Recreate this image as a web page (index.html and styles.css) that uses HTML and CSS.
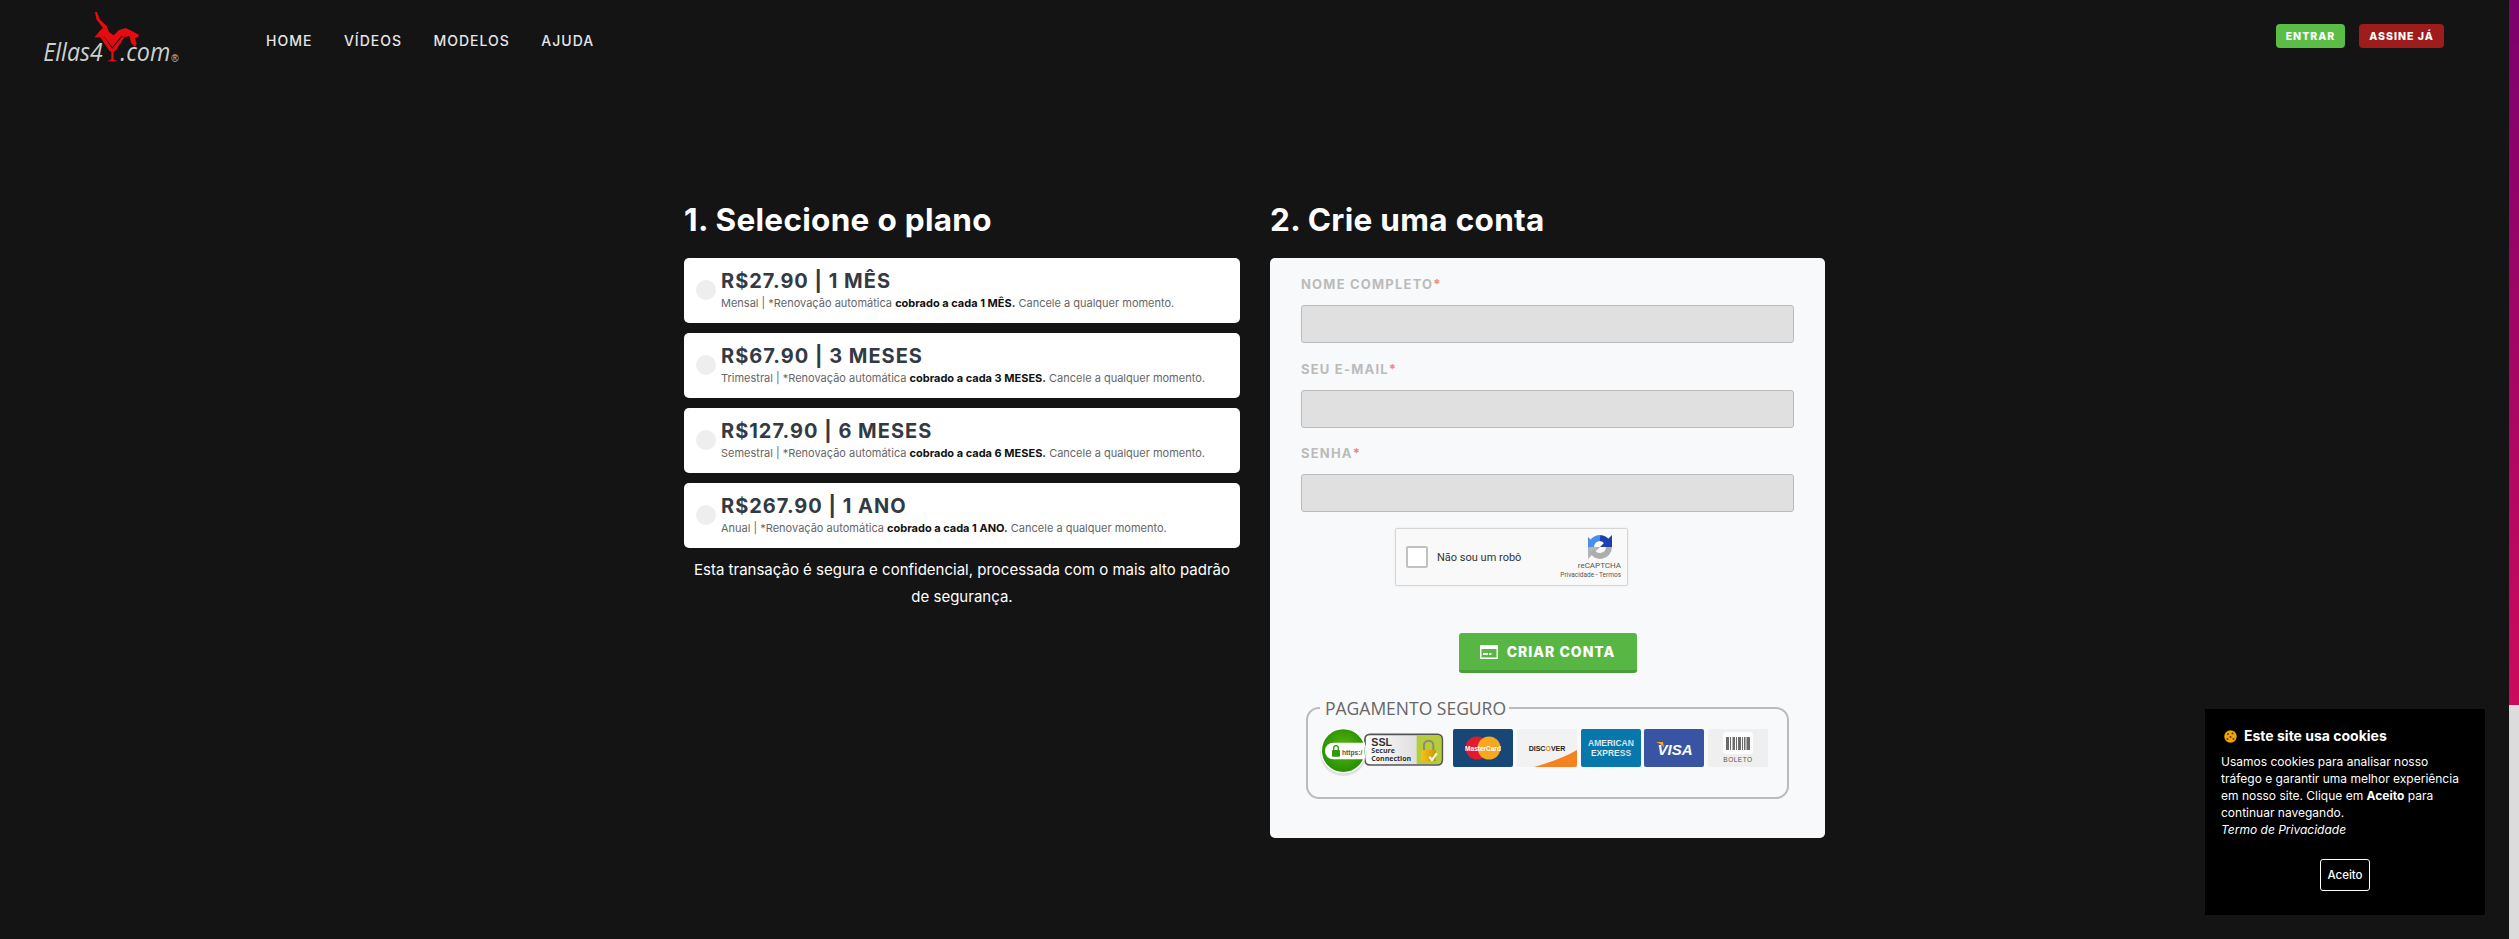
FILE: index.html
```html
<!DOCTYPE html>
<html lang="pt-BR">
<head>
<meta charset="utf-8">
<title>Ellas4Y - Assine</title>
<link rel="stylesheet" href="styles.css">
</head>
<body>
<div class="page">
  <header class="topbar">
    <a class="logo" href="#" aria-label="Ellas4Y.com">
      <svg width="150" height="62" viewBox="0 0 450 186">
        <path class="red" d="M180 12 L186 12 L194 34 L215 54 L222 72 L236 82 L252 66 L272 60 L292 70 L312 80 L309 88 L300 90 L305 108 L299 116 L288 104 L283 84 L268 88 L246 122 L240 130 L232 132 L224 130 L196 88 L178 88 L197 66 L204 60 L184 34 Z"/>
        <path class="dark" d="M199 84 L232 126 L266 84 L259 84 L232 117 L206 84 Z" />
        <path class="red" d="M197 82 L232 130 L270 82 L266 80 L232 122 L203 80 Z"/>
        <path class="red" d="M229 128 H236 V154 L248 160 H216 L229 154 Z"/>
        <text class="logo-text" x="25" y="160" textLength="178" lengthAdjust="spacingAndGlyphs">Ellas4</text>
        <text class="logo-text" x="256" y="160" textLength="150" lengthAdjust="spacingAndGlyphs">.com</text>
        <text class="logo-reg" x="409" y="163">®</text>
      </svg>
    </a>
    <nav class="mainnav">
      <a href="#">HOME</a>
      <a href="#">VÍDEOS</a>
      <a href="#">MODELOS</a>
      <a href="#">AJUDA</a>
    </nav>
    <div class="actions">
      <a class="pill pill-green" href="#">ENTRAR</a>
      <a class="pill pill-red" href="#">ASSINE JÁ</a>
    </div>
  </header>

  <main class="checkout">
    <section class="col">
      <h2>1. Selecione o plano</h2>
      <div class="plans">
        <label class="plan">
          <span class="radio"></span>
          <span class="plan-body">
            <strong class="price">R$27.90 | 1 MÊS</strong>
            <small class="terms">Mensal | *Renovação automática <b>cobrado a cada 1 MÊS.</b> Cancele a qualquer momento.</small>
          </span>
        </label>
        <label class="plan">
          <span class="radio"></span>
          <span class="plan-body">
            <strong class="price">R$67.90 | 3 MESES</strong>
            <small class="terms">Trimestral | *Renovação automática <b>cobrado a cada 3 MESES.</b> Cancele a qualquer momento.</small>
          </span>
        </label>
        <label class="plan">
          <span class="radio"></span>
          <span class="plan-body">
            <strong class="price">R$127.90 | 6 MESES</strong>
            <small class="terms">Semestral | *Renovação automática <b>cobrado a cada 6 MESES.</b> Cancele a qualquer momento.</small>
          </span>
        </label>
        <label class="plan">
          <span class="radio"></span>
          <span class="plan-body">
            <strong class="price">R$267.90 | 1 ANO</strong>
            <small class="terms">Anual | *Renovação automática <b>cobrado a cada 1 ANO.</b> Cancele a qualquer momento.</small>
          </span>
        </label>
      </div>
      <p class="secure-note">Esta transação é segura e confidencial, processada com o mais alto padrão de segurança.</p>
    </section>

    <section class="col">
      <h2>2. Crie uma conta</h2>
      <form class="signup">
        <div class="fields">
          <div class="field">
            <label>NOME COMPLETO<i>*</i></label>
            <div class="input"></div>
          </div>
          <div class="field">
            <label>SEU E-MAIL<i>*</i></label>
            <div class="input"></div>
          </div>
          <div class="field">
            <label>SENHA<i>*</i></label>
            <div class="input"></div>
          </div>
        </div>

        <div class="captcha">
          <span class="captcha-box"></span>
          <span class="captcha-label">Não sou um robô</span>
          <span class="captcha-brand">
            <svg width="26" height="26" viewBox="0 0 26 26">
              <path d="M4 13 A9 9 0 0 1 13 4" fill="none" stroke="#4a8ee8" stroke-width="6"/>
              <path d="M13 4 A9 9 0 0 1 20 8" fill="none" stroke="#1e3fae" stroke-width="6"/>
              <path d="M25 1 V13 H13 Z" fill="#1e3fae"/>
              <path d="M22 13 A9 9 0 0 1 5 17" fill="none" stroke="#adadad" stroke-width="6"/>
              <path d="M1 25 V13 H13 Z" fill="#adadad" opacity=".9"/>
              <path d="M1 3 L7 9 L1 14 Z" fill="#4a8ee8"/>
            </svg>
            <span class="cap-name">reCAPTCHA</span>
            <span class="cap-links">Privacidade - Termos</span>
          </span>
        </div>

        <button class="submit" type="button">
          <svg width="18" height="14" viewBox="0 0 18 14">
            <rect width="18" height="14" rx="1" fill="#fff"/>
            <rect x="1.5" y="4" width="15" height="8.5" fill="#58b744"/>
            <rect x="3" y="8" width="5" height="2" fill="#fff"/>
            <rect x="9" y="8" width="2.500" height="2" fill="#fff"/>
          </svg>
          CRIAR CONTA
        </button>

        <fieldset class="payment">
          <legend>PAGAMENTO SEGURO</legend>
          <div class="badges">
            <svg class="ssl" width="140" height="60" viewBox="0 0 420 180">
              <defs>
                <radialGradient id="gr" cx="50%" cy="45%" r="60%">
                  <stop offset="0" stop-color="#5cb80f"/>
                  <stop offset="1" stop-color="#1f8a02"/>
                </radialGradient>
                <linearGradient id="sl" x1="0" x2="1">
                  <stop offset="0" stop-color="#fff"/>
                  <stop offset="1" stop-color="#cfcfcf"/>
                </linearGradient>
                <linearGradient id="gd" x1="0" x2="1">
                  <stop offset="0" stop-color="#f5c21a"/>
                  <stop offset="1" stop-color="#cf9408"/>
                </linearGradient>
              </defs>
              <rect x="165" y="37" width="232" height="92" rx="14" fill="url(#sl)" stroke="#555" stroke-width="5"/>
              <path d="M320 40 H382 Q394 40 394 52 V114 Q394 126 382 126 H320 Z" fill="#b6cc3a"/>
              <text class="ssl-big" x="184" y="72">SSL</text>
              <text class="ssl-small" x="184" y="93">Secure</text>
              <text class="ssl-small" x="184" y="116">Connection</text>
              <path d="M342 84 V70 A14 14 0 0 1 370 70 V84" fill="none" stroke="#8b8b7a" stroke-width="6"/>
              <rect x="334" y="84" width="44" height="34" rx="2" fill="url(#gd)"/>
              <path d="M358 104 L366 114 L380 94" fill="none" stroke="#fff" stroke-width="6"/>
              <circle cx="100" cy="92" r="70" fill="#d5d5d5" opacity=".7"/>
              <circle cx="100" cy="86" r="66" fill="url(#gr)" stroke="#fff" stroke-width="4"/>
              <path d="M70 62 H164 L162 112 H70 A25 25 0 0 1 70 62 Z" fill="#fff"/>
              <rect x="66" y="84" width="24" height="20" rx="3" fill="#2f9a0a"/>
              <path d="M71 84 V78 A7 7 0 0 1 85 78 V84" fill="none" stroke="#2f9a0a" stroke-width="4"/>
              <text class="ssl-https" x="96" y="99">https:/</text>
            </svg>
            <svg class="pay" viewBox="0 0 60 38">
              <rect width="60" height="38" rx="2" fill="#164777"/>
              <circle cx="24" cy="19" r="11.500" fill="#e01b2e"/>
              <circle cx="36" cy="19" r="11.500" fill="#f8a71f"/>
              <text class="mc-text" x="30" y="21.500" text-anchor="middle">MasterCard</text>
            </svg>
            <svg class="pay" viewBox="0 0 60 38">
              <rect width="60" height="38" rx="2" fill="#f2f2f2"/>
              <path d="M17 38 Q45 30 60 21 V36 Q60 38 58 38 Z" fill="#f58220"/>
              <text class="disc-text" x="30" y="22" text-anchor="middle">DISC<tspan fill="#f58220">O</tspan>VER</text>
            </svg>
            <svg class="pay" viewBox="0 0 60 38">
              <rect width="60" height="38" rx="2" fill="#0877ac"/>
              <text class="amex-text" x="30" y="17" text-anchor="middle">AMERICAN</text>
              <text class="amex-text" x="30" y="27" text-anchor="middle">EXPRESS</text>
            </svg>
            <svg class="pay" viewBox="0 0 60 38">
              <rect width="60" height="38" rx="2" fill="#3a54a4"/>
              <path d="M12 13 L19 13 L20 19 Q18 15 12 13 Z" fill="#f7a823"/>
              <text class="visa-text" x="31" y="25.500" text-anchor="middle">VISA</text>
            </svg>
            <svg class="pay" viewBox="0 0 60 38">
              <rect width="60" height="38" rx="2" fill="#efefef"/>
              <rect x="15" y="3" width="30" height="22" rx="3" fill="#fdfdfd"/>
              <path d="M18 8 H21 V21 H18 Z M22 8 H23 V21 H22 Z M24.500 8 H27 V21 H24.500 Z M28 8 H29 V21 H28 Z M30 8 H33 V21 H30 Z M34 8 H35 V21 H34 Z M36 8 H37.500 V21 H36 Z M38.500 8 H42 V21 H38.500 Z" fill="#6b6b6b"/>
              <text class="bol-text" x="30" y="33" text-anchor="middle">BOLETO</text>
            </svg>
          </div>
        </fieldset>
      </form>
    </section>
  </main>
  <aside class="cookie">
    <h3>
      <svg width="13" height="13" viewBox="0 0 13 13">
        <circle cx="6.500" cy="6.500" r="6.200" fill="#f0a30a"/>
        <circle cx="4" cy="4" r="1" fill="#5b3a08"/>
        <circle cx="8.500" cy="3.500" r="1" fill="#5b3a08"/>
        <circle cx="6.500" cy="7" r="1" fill="#5b3a08"/>
        <circle cx="3.500" cy="9" r="1" fill="#5b3a08"/>
        <circle cx="9.500" cy="9" r="1" fill="#5b3a08"/>
      </svg>
      Este site usa cookies
    </h3>
    <p>Usamos cookies para analisar nosso tráfego e garantir uma melhor experiência em nosso site. Clique em <b>Aceito</b> para continuar navegando.<br><em>Termo de Privacidade</em></p>
    <div class="cookie-foot"><button type="button">Aceito</button></div>
  </aside>
</div>
<div class="scrollbar"><div class="thumb"></div></div>
</body>
</html>
```
FILE: styles.css
```css
* { box-sizing: border-box; }
html, body { height: 100%; }
body {
  margin: 0;
  display: flex;
  overflow: hidden;
  background: #141414;
  color: #fff;
  font-family: Inter, "Liberation Sans", sans-serif;
}
.page { flex: 1; min-width: 0; height: 939px; }
.scrollbar { width: 10px; height: 939px; background: #dcdcdc; }
.thumb { height: 705px; background: linear-gradient(180deg, #7b006e, #cd0a5c); }

.topbar { display: flex; height: 84px; padding: 8px 65px 0 35px; }
.logo { display: block; width: 150px; height: 62px; }
.logo svg { display: block; }
.logo .red { fill: #e40c10; }
.logo .dark { fill: #141414; }
.logo-text { font-family: "Open Sans", sans-serif; font-style: italic; font-size: 76px; fill: #cdd0cd; }
.logo-reg { font-family: "Liberation Sans", sans-serif; font-size: 30px; fill: #c4c4c4; }
.mainnav { display: flex; gap: 31.500px; margin-left: 81px; height: 64px; align-items: center; }
.mainnav a { color: #e6e6e6; text-decoration: none; font-size: 14px; letter-spacing: 1px; font-weight: 500; }
.actions { display: flex; gap: 14px; margin-left: auto; padding-top: 16px; align-items: flex-start; }
.pill {
  display: flex; align-items: center; justify-content: center;
  height: 24px; border-radius: 4px; color: #fff; text-decoration: none;
  font-size: 10.500px; font-weight: 800; letter-spacing: 1px;
}
.pill-green { width: 69px; background: #5bbd45; }
.pill-red { width: 85px; background: #9e1c1c; }

.checkout { display: grid; grid-template-columns: 556px 555px; gap: 30px; width: 1141px; margin: 118px auto 0; }
h2 { margin: 0 0 20px; font-size: 31.500px; line-height: 36px; font-weight: 700; letter-spacing: .3px; }
.plans { display: flex; flex-direction: column; gap: 10.500px; }
.plan { display: flex; align-items: center; gap: 5px; height: 64.500px; padding: 0 12px; background: #fff; border-radius: 5px; }
.radio { flex: none; width: 20px; height: 20px; border-radius: 50%; background: #eee; }
.plan-body { display: flex; flex-direction: column; gap: 1px; padding-bottom: 2px; }
.price { color: #333a44; font-size: 20px; line-height: 27px; font-weight: 700; letter-spacing: 1px; }
.terms { color: #666; font-size: 11px; line-height: 15px; font-weight: 400; }
.terms b { color: #111; font-weight: 700; }
.secure-note { margin: 8px 6px 0; text-align: center; font-size: 15px; line-height: 27px; color: #fff; }

.signup { height: 580px; padding: 19px 31px 0 31px; background: #f8f9fa; border-radius: 5px; display: flex; flex-direction: column; }
.fields { display: flex; flex-direction: column; gap: 18.500px; }
.field label { display: block; height: 15px; margin-bottom: 13px; color: #bbb; font-size: 13px; line-height: 15px; font-weight: 700; letter-spacing: 1.2px; }
.field label i { color: #ea8a8a; font-style: normal; letter-spacing: 0; }
.input { height: 38px; background: #e0e0e0; border: 1px solid #bbb; border-radius: 3px; }

.captcha {
  align-self: center; display: flex; align-items: center;
  width: 233px; height: 58px; margin: 16px 0 0 -72px; padding: 0 6px 0 10px;
  background: #f9f9f9; border: 1px solid #d6d6d6; border-radius: 2px; box-shadow: 0 0 3px rgba(0,0,0,.08);
  color: #333; font-family: Roboto, sans-serif;
}
.captcha-box { width: 22px; height: 22px; background: #fff; border: 2px solid #c1c1c1; border-radius: 2px; }
.captcha-label { margin-left: 9px; font-size: 11px; }
.captcha-brand { margin-left: auto; display: flex; flex-direction: column; align-items: flex-end; }
.captcha-brand svg { margin: 0 8px 0 0; }
.cap-name { font-size: 8px; line-height: 10px; color: #555; margin-top: 1px; }
.cap-links { font-size: 6.500px; line-height: 9px; color: #555; }

.submit {
  align-self: center; margin: 47px 0 0; width: 178px; height: 40px;
  display: flex; align-items: center; justify-content: center; gap: 9px;
  background: #58b744; border: 0; border-bottom: 3px solid #4a9e39; border-radius: 3px;
  color: #fff; font-family: Inter, sans-serif; font-size: 14px; font-weight: 800; letter-spacing: 1px;
}
.payment {
  width: 483px; min-width: 0; margin: 23px 0 0 5px; padding: 9px 0 30px 2px;
  border: 2px solid #bbb; border-radius: 13px;
}
.payment legend {
  margin-left: 10px; padding: 0 3px 0 5px;
  font-family: "Open Sans", sans-serif; font-size: 17.500px; line-height: 24px; color: #666;
}
.badges { display: flex; gap: 3.750px; align-items: flex-start; }
.ssl { flex: none; margin: -7px -.75px -15px 0; }
.pay { flex: none; display: block; width: 60px; height: 38px; }
.ssl-big { font: 700 32px "Liberation Sans", sans-serif; fill: #333; }
.ssl-small { font: 700 21px "Open Sans", sans-serif; fill: #333; }
.ssl-https { font: 600 20px "Liberation Sans", sans-serif; fill: #555; }
.mc-text { font: 700 6.500px "Liberation Sans", sans-serif; fill: #fff; }
.disc-text { font: 700 7px "Liberation Sans", sans-serif; fill: #222; }
.amex-text { font: 700 8.500px "Liberation Sans", sans-serif; fill: #fff; stroke: #0877ac; stroke-width: .2px; }
.visa-text { font: italic 700 15px "Liberation Sans", sans-serif; fill: #fff; }
.bol-text { font: 400 6.500px "Liberation Sans", sans-serif; fill: #555; letter-spacing: .5px; }

.cookie { position: fixed; left: 2205px; top: 709px; width: 280px; height: 206px; padding: 17px 16px 0; background: #000; }
.cookie h3 { display: flex; align-items: center; gap: 7px; margin: 0 0 7px 3px; font-size: 14px; line-height: 20px; font-weight: 700; }
.cookie p { margin: 0; padding-right: 6px; font-size: 12px; line-height: 17px; color: #fff; }
.cookie p b { font-weight: 700; }
.cookie-foot { display: flex; justify-content: center; margin-top: 21px; }
.cookie button { width: 50px; height: 32px; padding: 0; background: none; border: 1px solid #fff; border-radius: 3px; color: #fff; font: 500 11.500px Inter, sans-serif; }
```
